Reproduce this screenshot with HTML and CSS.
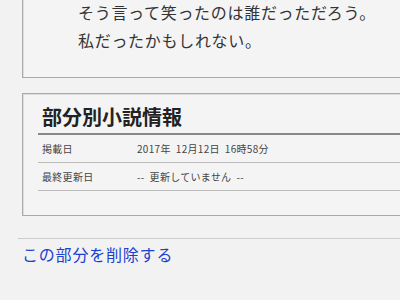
FILE: index.html
```html
<!DOCTYPE html>
<html lang="ja">

<head>
    <meta charset="UTF-8">
    <meta name="viewport" content="width=device-width, initial-scale=1.0">
    <title>部分別小説情報</title>

    <link rel="stylesheet" href="styles.css">
</head>

<body>
    <div class="page">
        <div class="box novel-body">
            <p>そう言って笑ったのは誰だっただろう。</p>
            <p>私だったかもしれない。</p>
        </div>

        <div class="box info">
            <h2>部分別小説情報</h2>
            <div class="row">
                <span class="label">掲載日</span>
                <span class="value">2017年&nbsp; 12月12日&nbsp; 16時58分</span>
            </div>
            <div class="row">
                <span class="label">最終更新日</span>
                <span class="value">--&nbsp; 更新していません&nbsp; --</span>
            </div>
        </div>

        <div class="delete">
            <a href="#">この部分を削除する</a>
        </div>
    </div>
</body>

</html>
```

FILE: styles.css
```css
* {
    margin: 0;
    padding: 0;
    box-sizing: border-box;
}

html,
body {
    background: #f2f2f2;
    overflow: hidden;
}

body {
    font-family: "Noto Sans CJK JP", "Noto Sans", sans-serif;
    color: #333;
}

.page {
    width: 460px;
    padding-left: 22px;
}

.box {
    border: 1px solid #aaa;
    box-shadow: inset 1px 1px 0 #ddd;
    background: #f4f4f4;
}

.novel-body {
    margin-top: -22px;
    padding: 19px 0 23px 55px;
    font-size: 16px;
    line-height: 28px;
    letter-spacing: 0.7px;
}

.info {
    margin-top: 15px;
    padding: 8px 0 24px 15px;
}

.info h2 {
    font-size: 20px;
    line-height: 30px;
    font-weight: bold;
    color: #222;
    padding-left: 4px;
    padding-bottom: 1px;
    border-bottom: 2px solid #888;
}

.row {
    display: flex;
    height: 28px;
    align-items: center;
    border-bottom: 1px solid #bbb;
    font-size: 10px;
    letter-spacing: 0.3px;
    color: #444;
}

.row .label {
    width: 99px;
    padding-left: 4px;
}

.delete {
    margin: 22px 0 0 -4px;
    border-top: 1px solid #ccc;
    padding: 3px 0 0 4px;
}

.delete a {
    font-size: 16px;
    line-height: 24px;
    letter-spacing: 0.8px;
    color: #1b3fd0;
    text-decoration: none;
}
```
